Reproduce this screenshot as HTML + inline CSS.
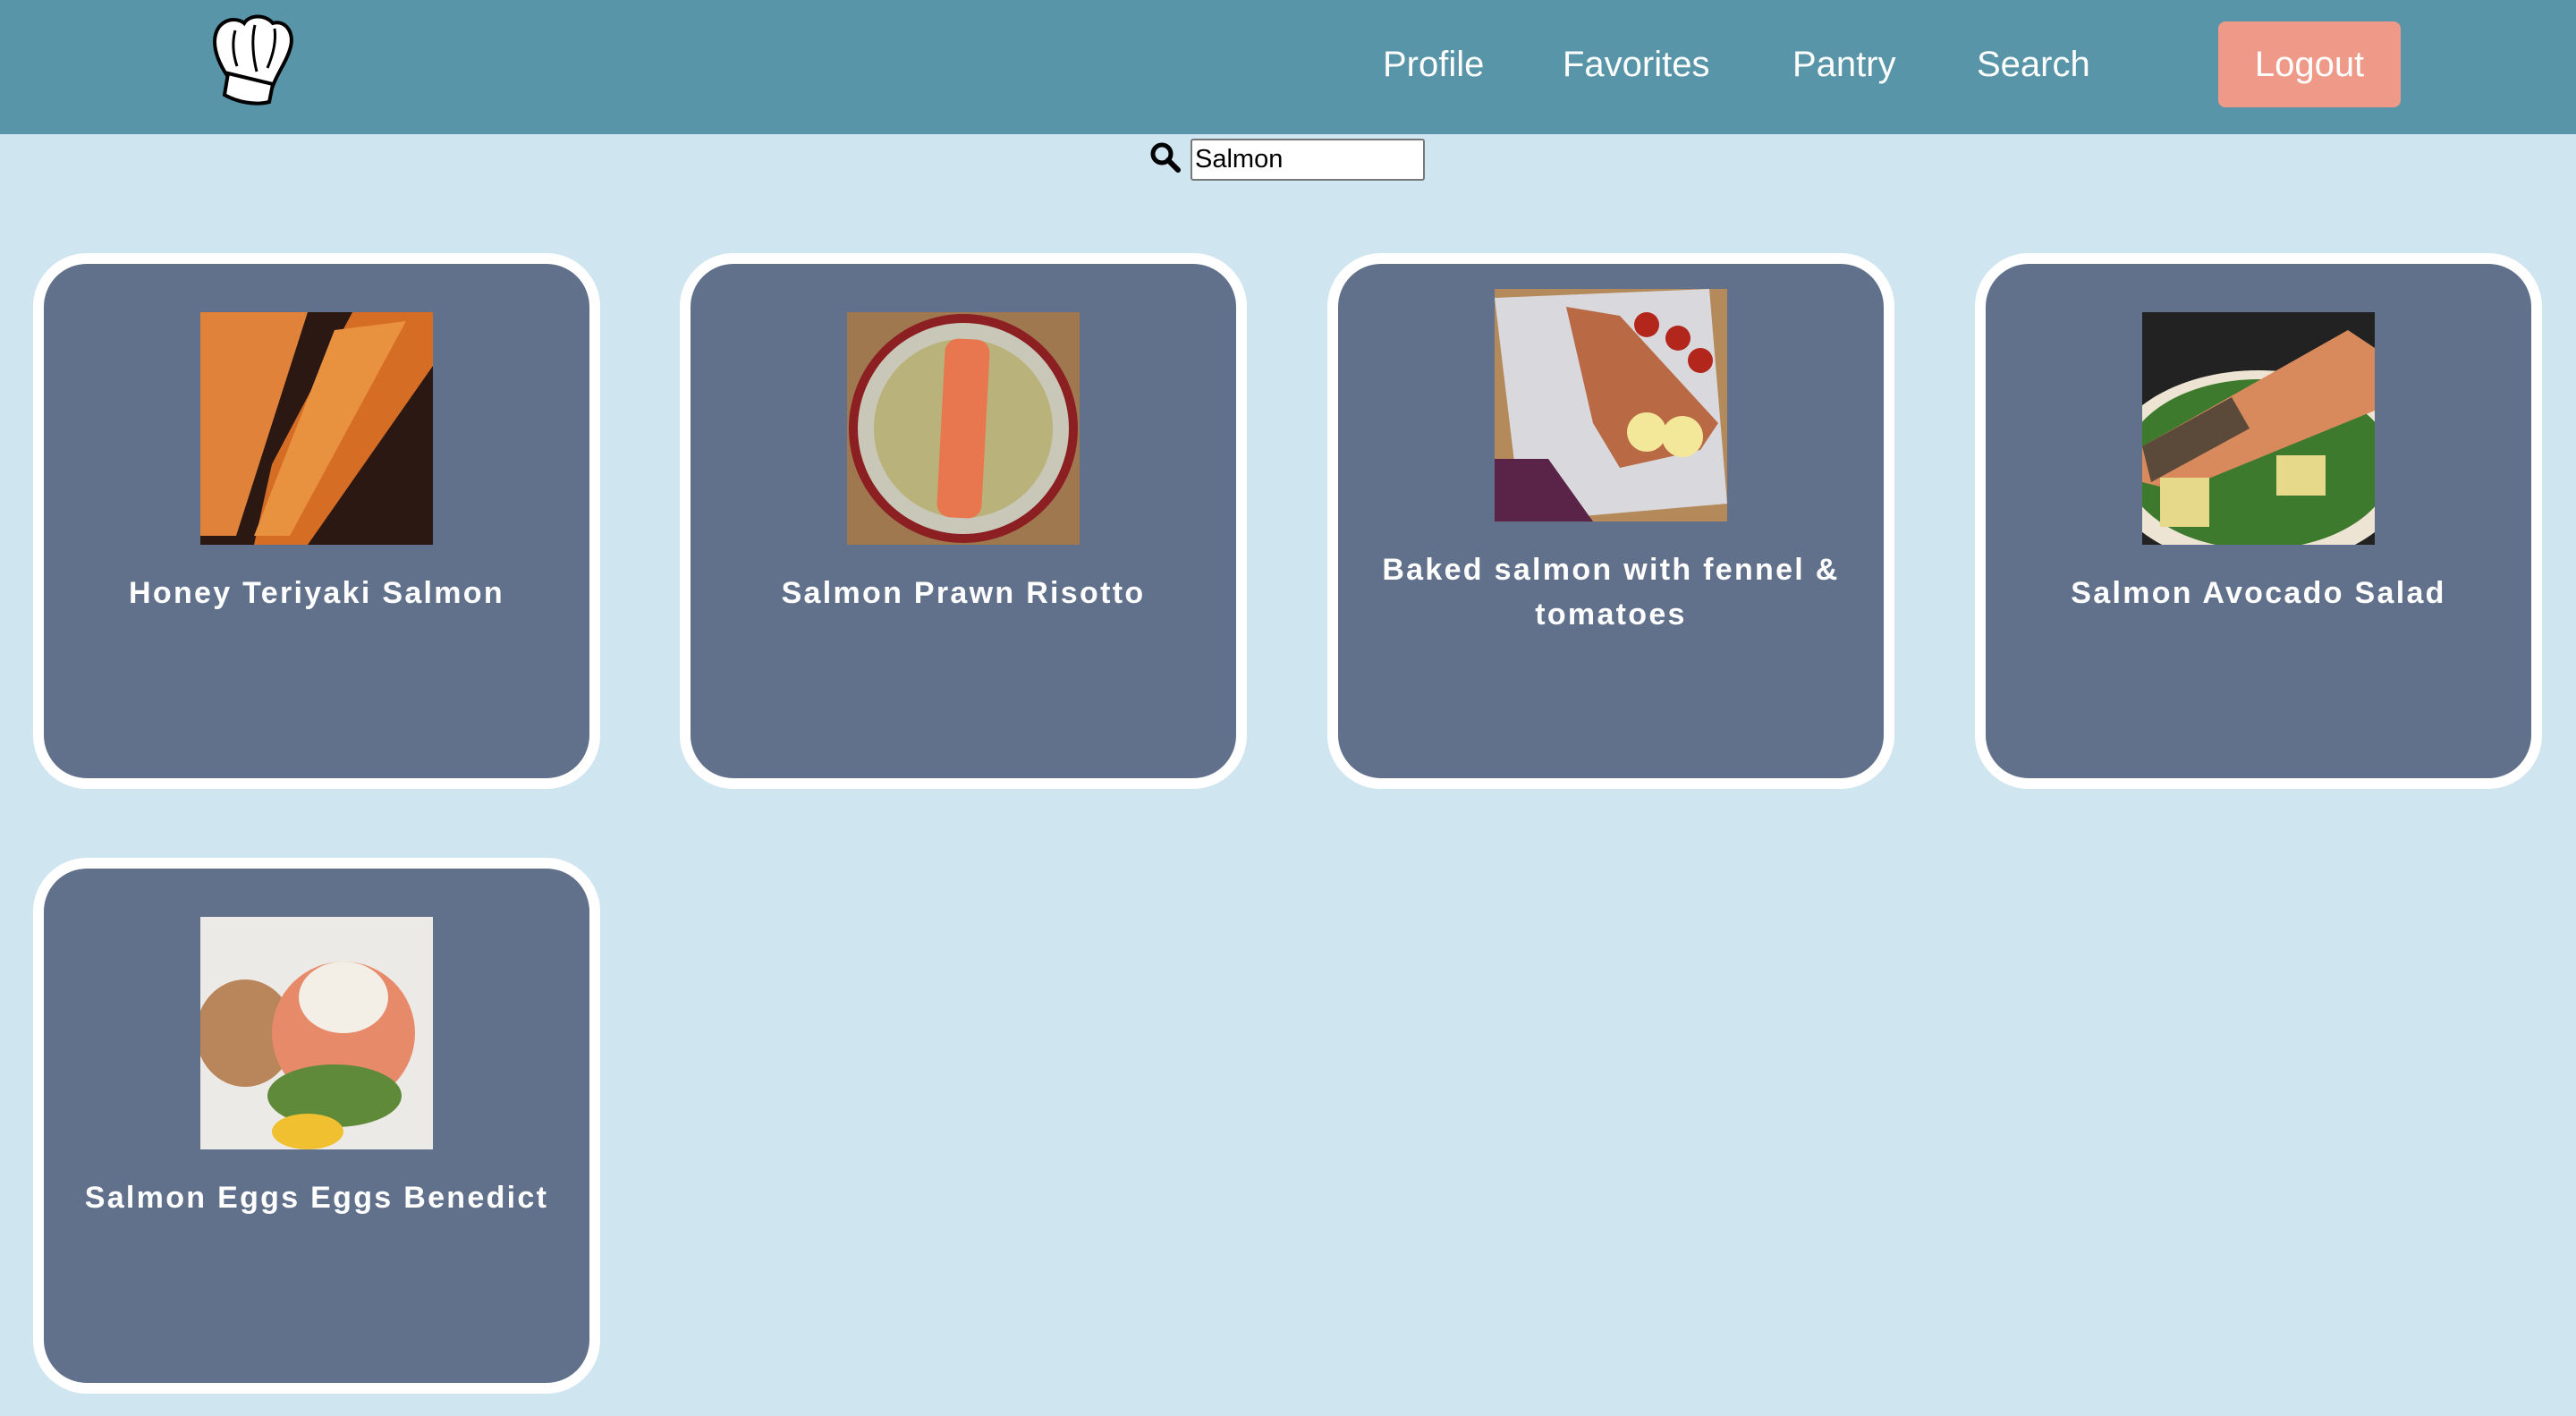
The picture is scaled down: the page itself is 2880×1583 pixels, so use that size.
<!DOCTYPE html>
<html><head><meta charset="utf-8">
<style>
*{margin:0;padding:0;box-sizing:border-box}
html,body{width:2880px;height:1583px;overflow:hidden;background:#cfe5ef;font-family:"Liberation Sans",sans-serif}
.hdr{position:absolute;left:0;top:0;width:2880px;height:150px;background:#5895a8}
.nav{position:absolute;top:46px;color:#fff;font-size:40px;line-height:52px}
.logout{position:absolute;left:2480px;top:24px;width:204px;height:96px;background:#ef9a88;border-radius:8px;color:#fff;font-size:40px;line-height:96px;text-align:center}
.card{position:absolute;width:634px;height:599px;background:#61718b;border:12px solid #fff;border-radius:60px}
.img{position:absolute;left:175px;width:260px;height:260px;overflow:hidden}
.t{position:absolute;left:0;width:610px;text-align:center;color:#fff;font-weight:bold;font-size:34px;letter-spacing:2.3px;line-height:50px}
</style></head><body>
<div class="hdr">
<svg style="position:absolute;left:235px;top:14px" width="94" height="106" viewBox="0 0 94 106">
<path d="M20 72 C6 52 0 30 10 16 C20 4 34 8 38 12 C44 2 62 2 70 12 C84 8 94 22 90 38 C86 54 76 66 70 82 Z" fill="#fff" stroke="#000" stroke-width="4"/>
<path d="M20 68 L70 80 L66 100 C50 104 30 100 16 92 Z" fill="#fff" stroke="#000" stroke-width="4"/>
<path d="M28 20 C24 34 26 48 30 60 M50 14 C46 30 48 50 52 66 M72 18 C74 32 70 48 64 62" fill="none" stroke="#000" stroke-width="3"/>
</svg>
<div class="nav" style="left:1546px">Profile</div>
<div class="nav" style="left:1747px">Favorites</div>
<div class="nav" style="left:2004px">Pantry</div>
<div class="nav" style="left:2210px">Search</div>
<div class="logout">Logout</div>
</div>
<svg style="position:absolute;left:1285px;top:158px" width="36" height="36" viewBox="0 0 36 36"><circle cx="14" cy="14" r="10" fill="none" stroke="#000" stroke-width="5"/><line x1="21" y1="21" x2="32" y2="32" stroke="#000" stroke-width="6" stroke-linecap="round"/></svg>
<div style="position:absolute;left:1331px;top:155px;width:262px;height:47px;background:#fff;border:2px solid #777;border-radius:3px;font-size:29px;line-height:43px;padding-left:3px;color:#000">Salmon</div>

<div class="card" style="left:37px;top:283px">
<div class="img" style="top:54px;background:#2a1a14">
<svg width="260" height="260"><rect width="260" height="260" fill="#2b1812"/><path d="M0 0 L120 0 L40 250 L0 250Z" fill="#e0823a"/><path d="M170 0 L260 0 L260 60 L120 260 L60 260 L80 170Z" fill="#d66d24"/><path d="M150 20 L230 10 L100 250 L60 250Z" fill="#e8913f"/></svg>
</div>
<div class="t" style="top:343px">Honey Teriyaki Salmon</div>
</div>

<div class="card" style="left:760px;top:283px">
<div class="img" style="top:54px">
<svg width="260" height="260"><rect width="260" height="260" fill="#a07850"/><circle cx="130" cy="130" r="128" fill="#8b1f22"/><circle cx="130" cy="130" r="118" fill="#c9c7b8"/><circle cx="130" cy="130" r="100" fill="#b9b27a"/><rect x="105" y="30" width="50" height="200" rx="15" fill="#e8764e" transform="rotate(3 130 130)"/></svg>
</div>
<div class="t" style="top:343px">Salmon Prawn Risotto</div>
</div>

<div class="card" style="left:1484px;top:283px">
<div class="img" style="top:28px">
<svg width="260" height="260"><rect width="260" height="260" fill="#b48a5a"/><path d="M0 10 L240 0 L260 240 L30 260Z" fill="#d9d8dc"/><path d="M80 20 L140 30 L250 150 L230 180 L140 200 L110 150Z" fill="#b96a45"/><circle cx="170" cy="40" r="14" fill="#b3261c"/><circle cx="205" cy="55" r="14" fill="#b3261c"/><circle cx="230" cy="80" r="14" fill="#b3261c"/><circle cx="170" cy="160" r="22" fill="#f3e79a"/><circle cx="210" cy="165" r="23" fill="#f3e79a"/><path d="M0 190 L60 190 L110 260 L0 260Z" fill="#5a2348"/></svg>
</div>
<div class="t" style="top:317px;left:30px;width:550px">Baked salmon with fennel &amp; tomatoes</div>
</div>

<div class="card" style="left:2208px;top:283px">
<div class="img" style="top:54px">
<svg width="260" height="260"><rect width="260" height="260" fill="#222"/><ellipse cx="130" cy="175" rx="170" ry="110" fill="#eee4d3"/><ellipse cx="130" cy="170" rx="150" ry="95" fill="#3d7a2e"/><path d="M0 150 L230 20 L260 40 L260 110 L40 200 L0 190Z" fill="#d98a5c"/><path d="M0 150 L100 95 L120 130 L10 190Z" fill="#5b4a3a"/><rect x="20" y="185" width="55" height="55" fill="#e7d98a"/><rect x="150" y="160" width="55" height="45" fill="#e7d98a"/></svg>
</div>
<div class="t" style="top:343px">Salmon Avocado Salad</div>
</div>

<div class="card" style="left:37px;top:959px">
<div class="img" style="top:54px">
<svg width="260" height="260"><rect width="260" height="260" fill="#eceae6"/><ellipse cx="50" cy="130" rx="55" ry="60" fill="#b9855a"/><ellipse cx="160" cy="130" rx="80" ry="80" fill="#e78a6a"/><ellipse cx="160" cy="90" rx="50" ry="40" fill="#f3efe6"/><ellipse cx="150" cy="200" rx="75" ry="35" fill="#5f8a3a"/><ellipse cx="120" cy="240" rx="40" ry="20" fill="#f0c030"/></svg>
</div>
<div class="t" style="top:343px">Salmon Eggs Eggs Benedict</div>
</div>
</body></html>
